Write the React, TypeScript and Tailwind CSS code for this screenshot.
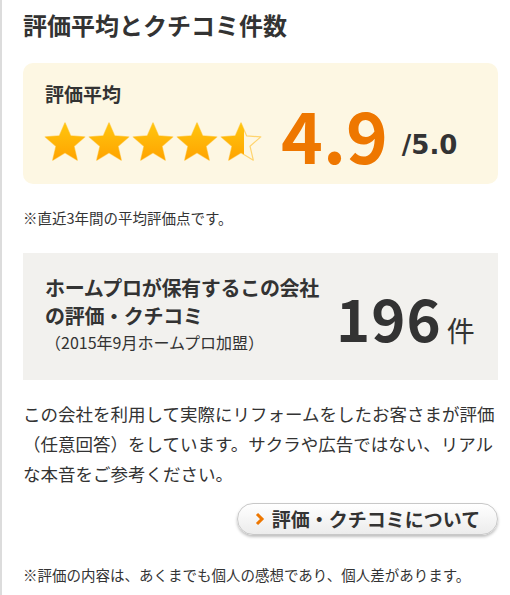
import React from "react";

const font = { fontFamily: '"Noto Sans CJK JP", "Noto Sans", sans-serif' };
const dv = { fontFamily: '"DejaVu Sans", Verdana, sans-serif' };

function Star({ fill }: { fill: number }) {
  const id = `g${Math.round(fill * 100)}`;
  const clip = `c${Math.round(fill * 100)}`;
  const d =
    "M21 0.8 L26.6 13.8 L40.8 14.9 L30 24.2 L33.3 38.2 L21 30.8 L8.7 38.2 L12 24.2 L1.2 14.9 L15.4 13.8 Z";
  return (
    <svg width="42" height="40" viewBox="0 0 42 40">
      <defs>
        <linearGradient id={id} x1="0" y1="0" x2="0" y2="1">
          <stop offset="0" stopColor="#ffc60f" />
          <stop offset="1" stopColor="#ffa300" />
        </linearGradient>
        <clipPath id={clip}>
          <rect x="0" y="0" width={42 * fill} height="40" />
        </clipPath>
      </defs>
      <path d={d} fill="none" stroke="#ffd46e" strokeWidth="1.2" strokeLinejoin="round" />
      <path d={d} fill={`url(#${id})`} clipPath={`url(#${clip})`} />
    </svg>
  );
}

export default function App() {
  return (
    <div className="w-[510px] h-[595px] bg-white text-[#333]" style={font}>
      <div className="h-full border-l-2 border-[#dcdcdc] pl-[21px] pr-[12px] pt-[8px]">
        <h2 className="text-[24px] font-bold leading-[34px]">評価平均とクチコミ件数</h2>

        <div className="mt-[21px] h-[121px] rounded-[10px] bg-[#fdf7e3] pl-[22px] pt-[18px]">
          <div className="text-[19px] font-bold leading-[26px]">評価平均</div>
          <div className="flex items-center">
            <div className="flex gap-[2px] mt-[8px] -ml-[1px]">
              <Star fill={1} />
              <Star fill={1} />
              <Star fill={1} />
              <Star fill={1} />
              <Star fill={0.57} />
            </div>
            <div className="ml-[19px] -mt-[10px] text-[71px] font-bold leading-[72px] text-[#ee7700]">4.9</div>
            <div className="ml-[14px] mt-[14px] text-[26px] font-bold leading-[30px]" style={dv}>/5.0</div>
          </div>
        </div>

        <p className="mt-[24px] text-[14.5px] leading-[20px]">※直近3年間の平均評価点です。</p>

        <div className="mt-[25px] h-[127px] bg-[#f2f1ee] pl-[22px] pt-[21px] flex">
          <div className="w-[285px]">
            <div className="text-[20px] font-bold leading-[28px] tracking-[-0.3px]">
              ホームプロが保有するこの会社
              <br />
              の評価・クチコミ
            </div>
            <div className="text-[16px] leading-[22px] mt-[1px]">（2015年9月ホームプロ加盟）</div>
          </div>
          <div className="flex items-baseline ml-[6px] mt-[13px]">
            <span className="text-[58px] font-bold leading-[60px] tracking-[1px]">196</span>
            <span className="ml-[5px] text-[28px] leading-[30px]">件</span>
          </div>
        </div>

        <p className="mt-[19px] text-[17.5px] leading-[30px]">
          この会社を利用して実際にリフォームをしたお客さまが評価（任意回答）をしています。サクラや広告ではない、リアルな本音をご参考ください。
        </p>

        <div className="mt-[14px] flex justify-end">
          <button className="h-[32px] w-[261px] rounded-full border border-[#c8c8c8] bg-gradient-to-b from-white to-[#ececec] shadow-[0_2px_3px_rgba(0,0,0,0.25)] flex items-center justify-center gap-[7px] text-[19px] font-bold text-[#333]">
            <svg width="10" height="14" viewBox="0 0 10 14">
              <path d="M2 2 L7 7 L2 12" fill="none" stroke="#ee7700" strokeWidth="3" />
            </svg>
            評価・クチコミについて
          </button>
        </div>

        <p className="mt-[30px] text-[14.5px] leading-[20px]">※評価の内容は、あくまでも個人の感想であり、個人差があります。</p>
      </div>
    </div>
  );
}
